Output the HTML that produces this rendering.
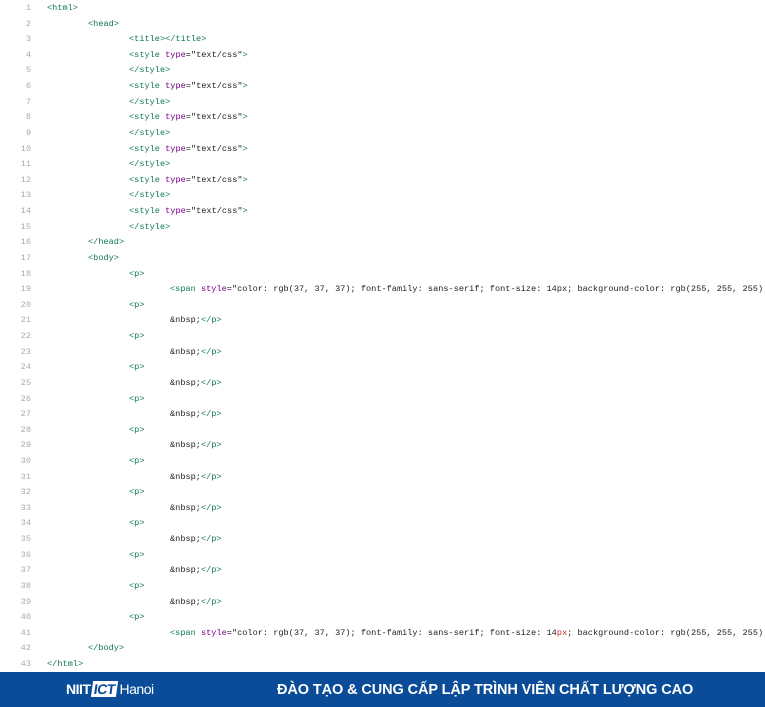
<!DOCTYPE html>
<html><head><style>
body{margin:0;width:765px;height:707px;background:#fff;overflow:hidden;position:relative;font-family:"Liberation Mono",monospace;}
.l{position:absolute;left:0;height:15.6px;font-size:8.6px;line-height:15.6px;white-space:pre;color:#222}
.n{position:absolute;left:0;width:31px;text-align:right;color:#aaa}
.c{position:absolute}
.t{color:#11765a}.a{color:#708}.s{color:#222}.r{color:#c22}
#f{position:absolute;left:0;top:672px;width:765px;height:35px;background:#0b4c98;color:#fff;font-family:"Liberation Sans",sans-serif}
</style></head><body>
<div id="code" style="position:absolute;left:0;top:1px;width:765px"></div>
<script>
const T=s=>'<span class="t">'+s+'</span>';
const st=T('&lt;style')+' <span class="a">type</span>=<span class="s">"text/css"</span>'+T('&gt;');
const sp=T('&lt;span')+' <span class="a">style</span>=<span class="s">"color: rgb(37, 37, 37); font-family: sans-serif; font-size: 14px; background-color: rgb(255, 255, 255)</span>';
const sp2=T('&lt;span')+' <span class="a">style</span>=<span class="s">"color: rgb(37, 37, 37); font-family: sans-serif; font-size: 14<span class="r">px</span>; background-color: rgb(255, 255, 255)</span>';
let L=[[0,T('&lt;html&gt;')],[1,T('&lt;head&gt;')],[2,T('&lt;title&gt;&lt;/title&gt;')]];
for(let i=0;i<6;i++){L.push([2,st]);L.push([2,T('&lt;/style&gt;')]);}
L.push([1,T('&lt;/head&gt;')],[1,T('&lt;body&gt;')],[2,T('&lt;p&gt;')],[3,sp]);
for(let i=0;i<10;i++){L.push([2,T('&lt;p&gt;')]);L.push([3,'&amp;nbsp;'+T('&lt;/p&gt;')]);}
L.push([2,T('&lt;p&gt;')],[3,sp2],[1,T('&lt;/body&gt;')],[0,T('&lt;/html&gt;')]);
let h='';L.forEach((x,i)=>{h+='<div class="l" style="top:'+(i*15.62)+'px"><span class="n">'+(i+1)+'</span><span class="c" style="left:'+(47+x[0]*41)+'px">'+x[1]+'</span></div>';});
document.getElementById('code').innerHTML=h;
</script>
<div id="f">
<div style="position:absolute;left:66px;top:9px;font-weight:bold;font-size:14px;letter-spacing:-0.5px">NIIT<span style="display:inline-block;background:#fff;color:#0b4c98;padding:0 2px;margin:0 2px;transform:skewX(-8deg)">ICT</span><span style="font-weight:normal">Hanoi</span></div>
<div style="position:absolute;left:277px;top:10px;font-weight:bold;font-size:14.5px;letter-spacing:-0.1px">ĐÀO TẠO &amp; CUNG CẤP LẬP TRÌNH VIÊN CHẤT LƯỢNG CAO</div>
</div>
</body></html>
